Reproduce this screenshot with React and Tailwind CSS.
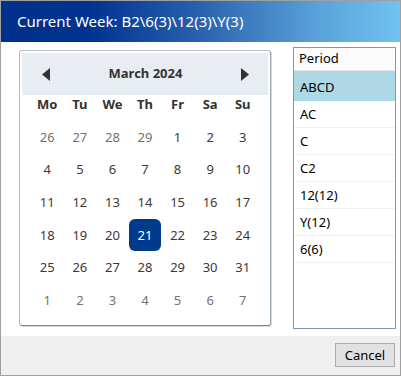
// App.jsx
// Week picker dialog: calendar on the left, period list on the right
import React from "react";

const dayNames = ["Mo", "Tu", "We", "Th", "Fr", "Sa", "Su"];

// March 2024 grid, leading/trailing days flagged as out of month
const weeks = [
  [[26, 0], [27, 0], [28, 0], [29, 0], [1, 1], [2, 1], [3, 1]],
  [[4, 1], [5, 1], [6, 1], [7, 1], [8, 1], [9, 1], [10, 1]],
  [[11, 1], [12, 1], [13, 1], [14, 1], [15, 1], [16, 1], [17, 1]],
  [[18, 1], [19, 1], [20, 1], [21, 1], [22, 1], [23, 1], [24, 1]],
  [[25, 1], [26, 1], [27, 1], [28, 1], [29, 1], [30, 1], [31, 1]],
  [[1, 0], [2, 0], [3, 0], [4, 0], [5, 0], [6, 0], [7, 0]],
];

const periods = ["ABCD", "AC", "C", "C2", "12(12)", "Y(12)", "6(6)"];

function Calendar() {
  return (
    <div className="w-[252px] h-[276px] border border-[#b5bdc7] border-b-[#7d8896] border-r-[#9aa4b0] rounded-[3px] bg-white p-[2px] shadow-[1px_1px_0_#d5d9de]">
      {/* Month header */}
      <div className="h-[42px] bg-[#e8edf3] flex items-center justify-between pl-[20px] pr-[19px]">
        <svg width="8" height="13" viewBox="0 0 8 13">
          <path d="M8 0 L0 6.5 L8 13 Z" fill="#333" />
        </svg>
        <span className="text-[13px] font-bold text-[#333]">March 2024</span>
        <svg width="8" height="13" viewBox="0 0 8 13">
          <path d="M0 0 L8 6.5 L0 13 Z" fill="#333" />
        </svg>
      </div>

      {/* Day names */}
      <div className="w-[228px] mx-auto grid grid-cols-7 h-[20px] items-center">
        {dayNames.map((d) => (
          <div key={d} className="text-center text-[13px] font-bold text-[#333]">
            {d}
          </div>
        ))}
      </div>

      {/* Dates */}
      <div className="w-[228px] mx-auto mt-[6px] grid grid-cols-7">
        {weeks.flat().map(([n, inMonth], i) => {
          const selected = inMonth && n === 21;
          return (
            <div key={i} className="h-[32.7px] flex items-center justify-center">
              <div
                className={
                  selected
                    ? "w-[33px] h-[32px] rounded-[6px] bg-[#003a8c] text-white flex items-center justify-center text-[13px]"
                    : inMonth
                    ? "text-[13px] text-[#3d3a36]"
                    : "text-[13px] text-[#77736e]"
                }
              >
                {n}
              </div>
            </div>
          );
        })}
      </div>
    </div>
  );
}

function PeriodList() {
  return (
    <div className="w-[103px] h-[282px] border border-[#7f97b5] bg-white">
      <div className="h-[23px] flex items-center pl-[5px] text-[13px] text-black border-b border-[#e8e8e8] bg-[#fcfcfc]">
        Period
      </div>
      {periods.map((p, i) => (
        <div
          key={p}
          className={
            i === 0
              ? "h-[30px] flex items-center pl-[6px] pt-[4px] text-[13px] text-black bg-[#add8e6]"
              : "h-[27px] flex items-center pl-[6px] pt-[2px] text-[13px] text-black border-b border-[#f0f0f0]"
          }
        >
          {p}
        </div>
      ))}
    </div>
  );
}

export default function App() {
  return (
    <div
      className="w-[401px] h-[376px] flex flex-col border border-[#a0a0a0] bg-white"
      style={{ fontFamily: '"Noto Sans", "Open Sans", sans-serif' }}
    >
      {/* Title bar */}
      <div className="h-[41px] shrink-0 flex items-center pl-[16px] bg-[linear-gradient(90deg,#00308a_0%,#003290_22%,#2a62ad_50%,#5aa3db_80%,#70c2f0_100%)]">
        <span className="text-white text-[15px] leading-none">Current Week: B2\6(3)\12(3)\Y(3)</span>
      </div>

      {/* Body */}
      <div className="flex-1 flex items-start">
        <div className="ml-[18px] mt-[8px]">
          <Calendar />
        </div>
        <div className="ml-[22px] mt-[5px]">
          <PeriodList />
        </div>
      </div>

      {/* Footer */}
      <div className="h-[39px] shrink-0 bg-[#f0f0f0] flex items-start justify-end pr-[5px] pt-[7px]">
        <button className="w-[60px] h-[24px] border border-[#adadad] bg-[#e1e1e1] text-[13px] text-black leading-none">
          Cancel
        </button>
      </div>
    </div>
  );
}
